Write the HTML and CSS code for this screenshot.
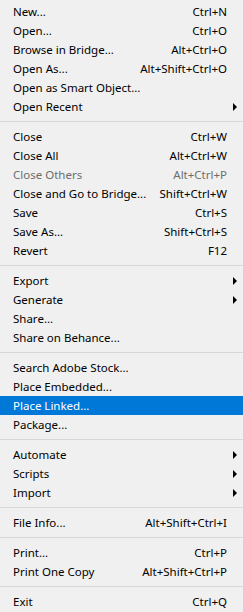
FILE: index.html
```html
<!DOCTYPE html>
<html lang="en">
<head>
    <meta charset="UTF-8">
    <title>File Menu</title>
    <link rel="stylesheet" href="styles.css">
</head>
<body>
    <ul class="menu">
        <li class="menu-item"><span class="label">New...</span><span class="shortcut">Ctrl+N</span><span class="arrow"></span></li>
        <li class="menu-item"><span class="label">Open...</span><span class="shortcut">Ctrl+O</span><span class="arrow"></span></li>
        <li class="menu-item"><span class="label">Browse in Bridge...</span><span class="shortcut">Alt+Ctrl+O</span><span class="arrow"></span></li>
        <li class="menu-item"><span class="label">Open As...</span><span class="shortcut">Alt+Shift+Ctrl+O</span><span class="arrow"></span></li>
        <li class="menu-item"><span class="label">Open as Smart Object...</span><span class="shortcut"></span><span class="arrow"></span></li>
        <li class="menu-item"><span class="label">Open Recent</span><span class="shortcut"></span><span class="arrow sub"></span></li>
        <li class="separator"></li>
        <li class="menu-item"><span class="label">Close</span><span class="shortcut">Ctrl+W</span><span class="arrow"></span></li>
        <li class="menu-item"><span class="label">Close All</span><span class="shortcut">Alt+Ctrl+W</span><span class="arrow"></span></li>
        <li class="menu-item disabled"><span class="label">Close Others</span><span class="shortcut">Alt+Ctrl+P</span><span class="arrow"></span></li>
        <li class="menu-item"><span class="label">Close and Go to Bridge...</span><span class="shortcut">Shift+Ctrl+W</span><span class="arrow"></span></li>
        <li class="menu-item"><span class="label">Save</span><span class="shortcut">Ctrl+S</span><span class="arrow"></span></li>
        <li class="menu-item"><span class="label">Save As...</span><span class="shortcut">Shift+Ctrl+S</span><span class="arrow"></span></li>
        <li class="menu-item"><span class="label">Revert</span><span class="shortcut">F12</span><span class="arrow"></span></li>
        <li class="separator"></li>
        <li class="menu-item"><span class="label">Export</span><span class="shortcut"></span><span class="arrow sub"></span></li>
        <li class="menu-item"><span class="label">Generate</span><span class="shortcut"></span><span class="arrow sub"></span></li>
        <li class="menu-item"><span class="label">Share...</span><span class="shortcut"></span><span class="arrow"></span></li>
        <li class="menu-item"><span class="label">Share on Behance...</span><span class="shortcut"></span><span class="arrow"></span></li>
        <li class="separator"></li>
        <li class="menu-item"><span class="label">Search Adobe Stock...</span><span class="shortcut"></span><span class="arrow"></span></li>
        <li class="menu-item"><span class="label">Place Embedded...</span><span class="shortcut"></span><span class="arrow"></span></li>
        <li class="menu-item active"><span class="label">Place Linked...</span><span class="shortcut"></span><span class="arrow"></span></li>
        <li class="menu-item"><span class="label">Package...</span><span class="shortcut"></span><span class="arrow"></span></li>
        <li class="separator"></li>
        <li class="menu-item"><span class="label">Automate</span><span class="shortcut"></span><span class="arrow sub"></span></li>
        <li class="menu-item"><span class="label">Scripts</span><span class="shortcut"></span><span class="arrow sub"></span></li>
        <li class="menu-item"><span class="label">Import</span><span class="shortcut"></span><span class="arrow sub"></span></li>
        <li class="separator"></li>
        <li class="menu-item"><span class="label">File Info...</span><span class="shortcut">Alt+Shift+Ctrl+I</span><span class="arrow"></span></li>
        <li class="separator"></li>
        <li class="menu-item"><span class="label">Print...</span><span class="shortcut">Ctrl+P</span><span class="arrow"></span></li>
        <li class="menu-item"><span class="label">Print One Copy</span><span class="shortcut">Alt+Shift+Ctrl+P</span><span class="arrow"></span></li>
        <li class="separator"></li>
        <li class="menu-item"><span class="label">Exit</span><span class="shortcut">Ctrl+Q</span><span class="arrow"></span></li>
    </ul>
</body>
</html>
```

FILE: styles.css
```css
body {
    margin: 0;
    background-color: #f0f0f0;
    font-family: 'Noto Sans', 'Open Sans', sans-serif;
    font-size: 11.5px;
    color: #000000;
}

.menu {
    list-style: none;
    margin: 0;
    padding: 2px 0 1px 0;
    width: 243px;
    background-color: #f0f0f0;
}

.menu-item {
    display: flex;
    align-items: center;
    height: 19px;
    line-height: 19px;
    padding-left: 13px;
    white-space: nowrap;
}

.menu-item .label {
    flex: 1;
}

.menu-item .shortcut {
    text-align: right;
}

.menu-item .arrow {
    width: 16px;
    height: 19px;
    position: relative;
}

.menu-item .arrow.sub::after {
    content: '';
    position: absolute;
    left: 6px;
    top: 6px;
    border-top: 4px solid transparent;
    border-bottom: 4px solid transparent;
    border-left: 4px solid #000000;
}

.menu-item.disabled {
    color: #6d6d6d;
}

.menu-item.active {
    background-color: #0078d7;
    color: #ffffff;
}

.separator {
    height: 11px;
    position: relative;
}

.separator::after {
    content: '';
    position: absolute;
    left: 0;
    right: 0;
    top: 5px;
    height: 1px;
    background-color: #d7d7d7;
}
```
